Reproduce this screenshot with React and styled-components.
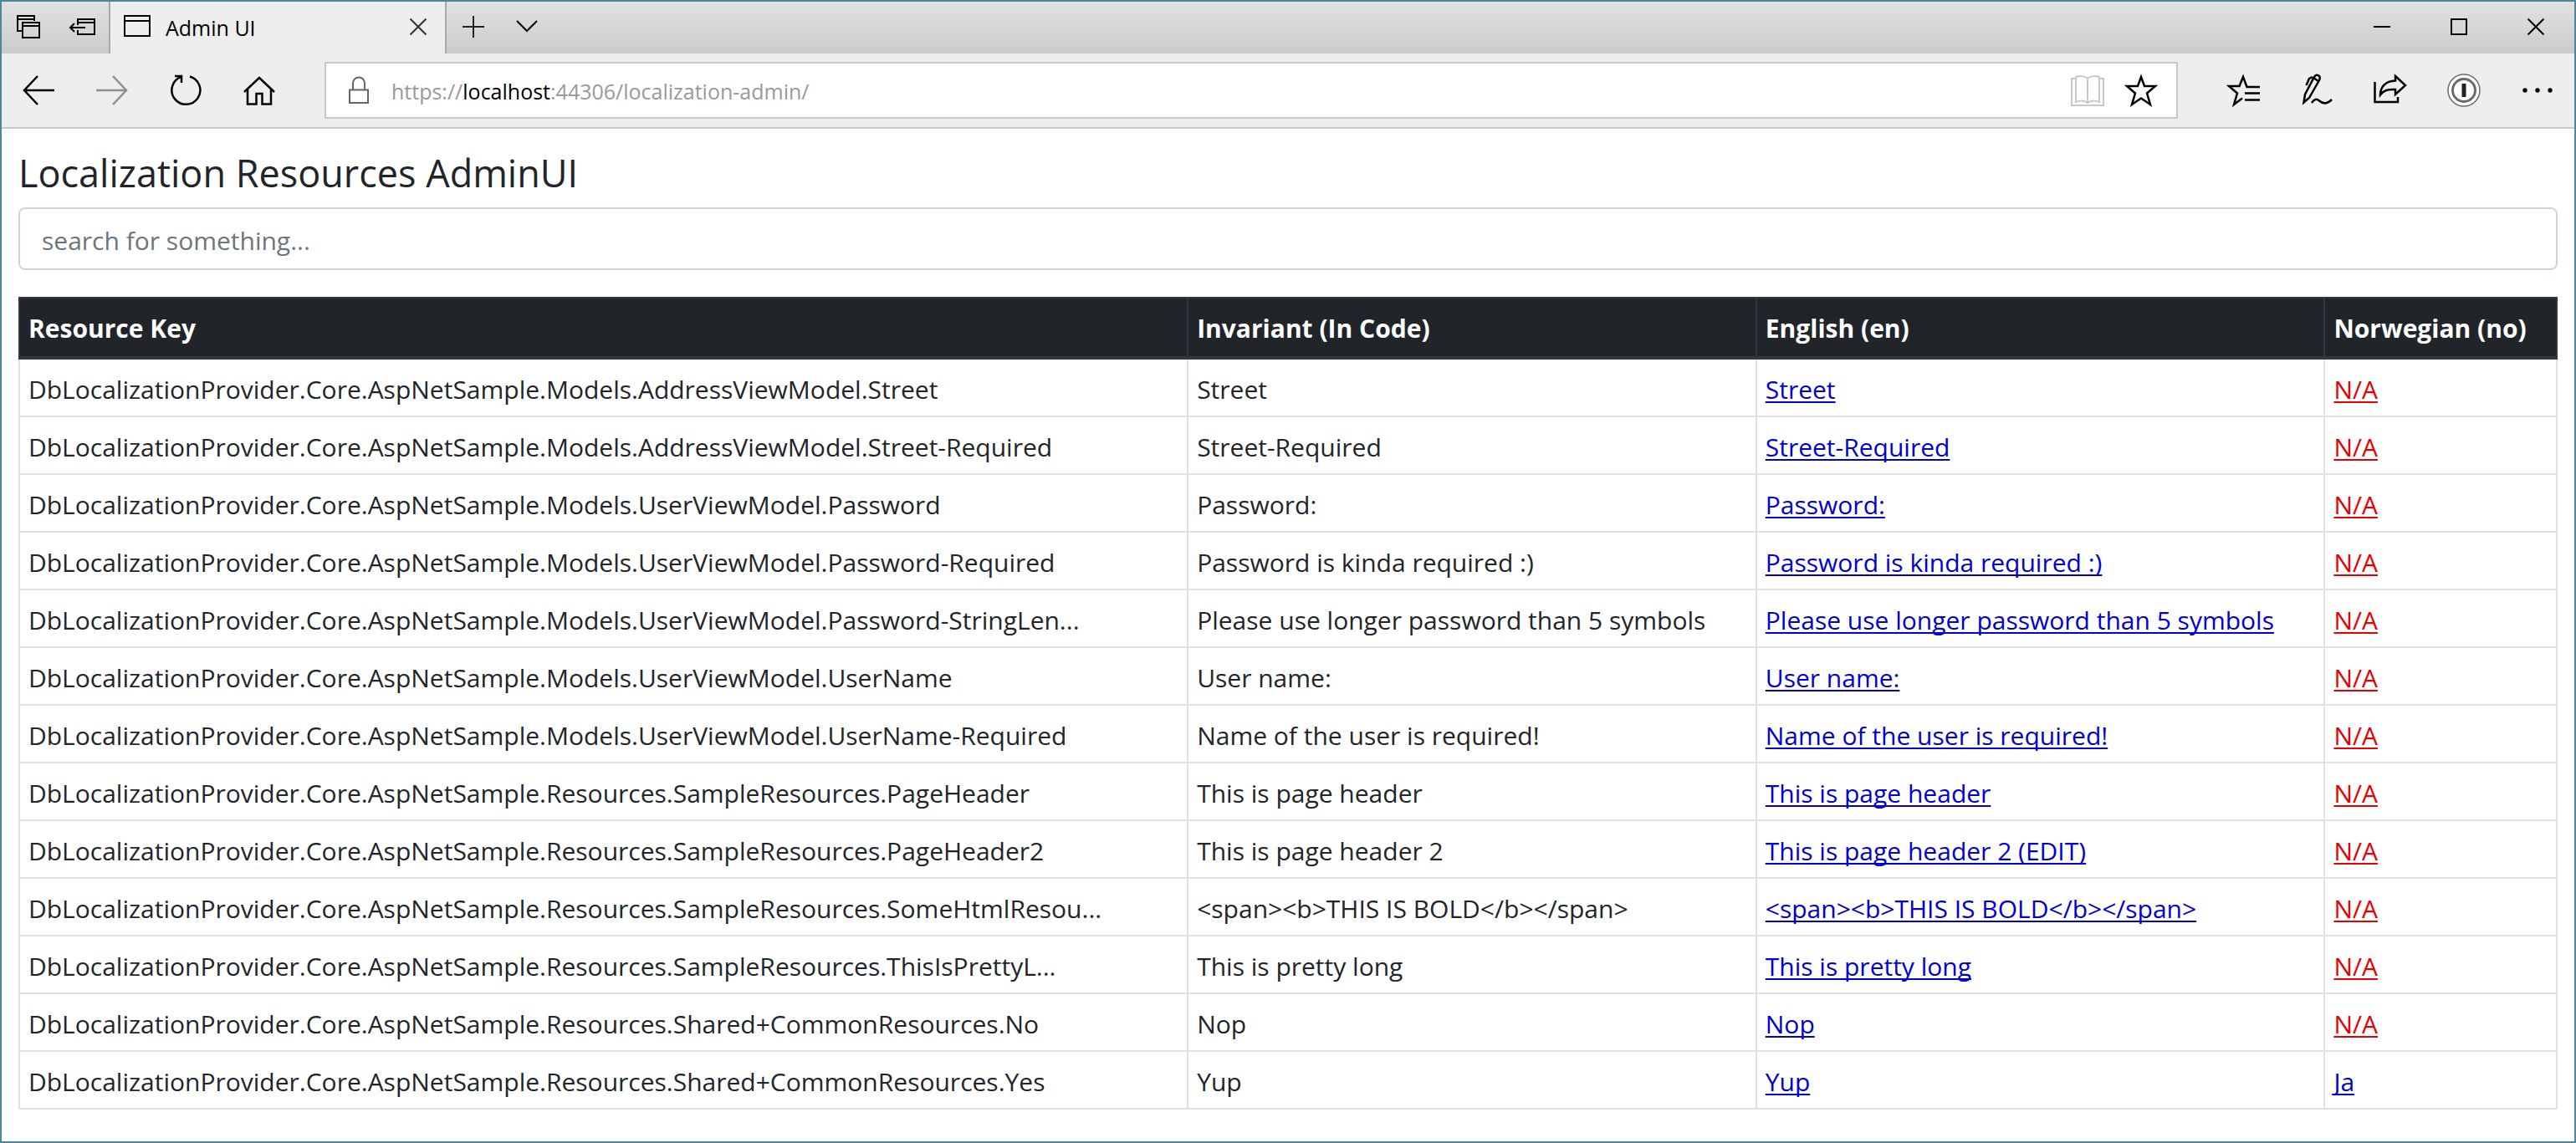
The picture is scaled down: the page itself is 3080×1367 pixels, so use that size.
import React from 'react';
import styled, { createGlobalStyle, css } from 'styled-components';

const GlobalStyle = createGlobalStyle`
  *, *::before, *::after { box-sizing: border-box; }
  body {
    margin: 0;
    background: #fff;
    color: #212529;
    font-family: "Open Sans", "Noto Sans", sans-serif;
    font-size: 30px;
  }
`;

/* ---------- browser window ---------- */

const Window = styled.div`
  display: flex;
  flex-direction: column;
  min-height: 100vh;
  border: 2px solid #4a889c;
`;

const TabStrip = styled.header`
  display: flex;
  height: 62px;
  background: linear-gradient(#e2e2e2, #cbcbcb);
`;

const Tab = styled.div`
  display: flex;
  align-items: center;
  width: 404px;
  padding-left: 16px;
  gap: 18px;
  border: solid #a9a9a9;
  border-width: 0 2px;
  background: #eee;
  color: #000;
  font-size: 25px;
`;

const TabTitle = styled.span`
  flex: 1;
`;

const Spacer = styled.div`
  flex: 1;
`;

const buttonWidths = { tab: '64px', lock: '78px', tool: '88px', caption: '92px' };

const IconButton = styled.button`
  display: flex;
  flex: none;
  align-items: center;
  justify-content: center;
  align-self: stretch;
  width: ${({ $kind }) => buttonWidths[$kind]};
  padding: 0;
  border: 0;
  background: none;
  color: ${({ $tone }) => $tone || '#000'};
`;

const Toolbar = styled.nav`
  display: flex;
  align-items: center;
  height: 90px;
  border-bottom: 2px solid #c8c8c8;
  background: #eee;
`;

const AddressBar = styled.div`
  display: flex;
  flex: 1;
  align-items: center;
  height: 68px;
  margin: 0 34px;
  padding-right: 10px;
  border: 2px solid #c8c8c8;
  background: #fff;
`;

const Url = styled.div`
  flex: 1;
  padding-top: 2px;
  color: #999;
  font-size: 25px;
  white-space: nowrap;
  outline: none;
`;

const Host = styled.span`
  color: #000;
`;

const Glyph = styled.svg`
  display: block;
  flex: none;
  fill: none;
  stroke: currentColor;
  stroke-width: ${({ $weight }) => $weight || 2};
`;

function Icon({ weight, children }) {
  return (
    <Glyph $weight={weight} width="40" height="40" viewBox="0 0 40 40" aria-hidden="true">
      {children}
    </Glyph>
  );
}

/* ---------- admin page ---------- */

const Page = styled.main`
  flex: 1;
  padding: 24px 20px;
`;

const Title = styled.h1`
  margin: 0 0 12px;
  font-size: 45px;
  font-weight: 400;
  line-height: 58px;
`;

const Search = styled.input`
  display: block;
  width: 100%;
  height: 75px;
  margin-bottom: 32px;
  padding: 4px 26px 0;
  border: 2px solid #ced4da;
  border-radius: 8px;
  background: #fff;
  color: #495057;
  font: inherit;

  &::placeholder {
    color: #6c757d;
    opacity: 1;
  }
`;

const Table = styled.table`
  width: 100%;
  table-layout: fixed;
  border-collapse: collapse;
  line-height: 47px;
`;

const cell = css`
  padding: 12px 10px 8px;
  text-align: left;
  white-space: nowrap;
`;

const HeadCell = styled.th`
  ${cell}
  width: ${({ $width }) => $width || 'auto'};
  padding-bottom: 10px;
  border: 2px solid #32383e;
  border-bottom-width: 4px;
  background: #212529;
  color: #fff;
  font-weight: 700;
`;

const Cell = styled.td`
  ${cell}
  border: 2px solid #dee2e6;
`;

const Translation = styled.a`
  color: ${({ $missing }) => ($missing ? '#e60000' : '#0000d0')};
  text-decoration: underline;
  text-decoration-thickness: 2px;
  text-decoration-skip-ink: none;
  text-underline-offset: 3px;
`;

const columns = [
  { label: 'Resource Key', width: '46.05%' },
  { label: 'Invariant (In Code)', width: '22.4%' },
  { label: 'English (en)', width: '22.4%' },
  { label: 'Norwegian (no)' },
];

const root = 'DbLocalizationProvider.Core.AspNetSample.';

const resources = [
  { key: 'Models.AddressViewModel.Street', text: 'Street' },
  { key: 'Models.AddressViewModel.Street-Required', text: 'Street-Required' },
  { key: 'Models.UserViewModel.Password', text: 'Password:' },
  { key: 'Models.UserViewModel.Password-Required', text: 'Password is kinda required :)' },
  { key: 'Models.UserViewModel.Password-StringLen...', text: 'Please use longer password than 5 symbols' },
  { key: 'Models.UserViewModel.UserName', text: 'User name:' },
  { key: 'Models.UserViewModel.UserName-Required', text: 'Name of the user is required!' },
  { key: 'Resources.SampleResources.PageHeader', text: 'This is page header' },
  { key: 'Resources.SampleResources.PageHeader2', text: 'This is page header 2', en: 'This is page header 2 (EDIT)' },
  { key: 'Resources.SampleResources.SomeHtmlResou...', text: '<span><b>THIS IS BOLD</b></span>' },
  { key: 'Resources.SampleResources.ThisIsPrettyL...', text: 'This is pretty long' },
  { key: 'Resources.Shared+CommonResources.No', text: 'Nop' },
  { key: 'Resources.Shared+CommonResources.Yes', text: 'Yup', no: 'Ja' },
];

function BrowserTabs() {
  return (
    <TabStrip>
      <IconButton $kind="tab" aria-label="Tabs you've set aside">
        <Icon><path d="M12 24H7V6H27V12M7 10H27M13 14H33V32H13ZM13 18H33" /></Icon>
      </IconButton>
      <IconButton $kind="tab" aria-label="Set these tabs aside">
        <Icon><path d="M15 17V10H35V28H15V23M15 14H35M24 20H6M11 15L6 20L11 25" /></Icon>
      </IconButton>
      <Tab>
        <Glyph width="32" height="30" viewBox="0 0 32 30" aria-hidden="true">
          <path d="M1 1H31V25H1ZM1 7H31" />
        </Glyph>
        <TabTitle>Admin UI</TabTitle>
        <IconButton $kind="tab" $tone="#333" aria-label="Close tab">
          <Icon><path d="M10.500 9.500L29.500 28.500M29.500 9.500L10.500 28.500" /></Icon>
        </IconButton>
      </Tab>
      <IconButton $kind="tab" $tone="#222" aria-label="New tab">
        <Icon><path d="M7 19H33M20 6V32" /></Icon>
      </IconButton>
      <IconButton $kind="tab" aria-label="Show tab previews">
        <Icon><path d="M8 12L20 24L32 12" /></Icon>
      </IconButton>
      <Spacer />
      <IconButton $kind="caption" aria-label="Minimize">
        <Icon><path d="M10 19H30" /></Icon>
      </IconButton>
      <IconButton $kind="caption" aria-label="Maximize">
        <Icon><path d="M11 10H29V28H11Z" /></Icon>
      </IconButton>
      <IconButton $kind="caption" aria-label="Close">
        <Icon><path d="M10.500 9.500L29.500 28.500M29.500 9.500L10.500 28.500" /></Icon>
      </IconButton>
    </TabStrip>
  );
}

function BrowserToolbar() {
  return (
    <Toolbar>
      <IconButton $kind="tool" aria-label="Back">
        <Icon weight={2.5}><path d="M39 20H3M19 3L3 20L19 37" /></Icon>
      </IconButton>
      <IconButton $kind="tool" $tone="#8e8e8e" aria-label="Forward">
        <Icon weight={2.5}><path d="M1 20H37M21 3L37 20L21 37" /></Icon>
      </IconButton>
      <IconButton $kind="tool" aria-label="Refresh">
        <Icon weight={2.5}><path d="M25 3.500A17 17 0 1 1 14 4.100M7 3H15V11" /></Icon>
      </IconButton>
      <IconButton $kind="tool" aria-label="Home">
        <Icon weight={2.5}><path d="M2 22L20 5L38 22M6 19V36.500H16.500V24H23.500V36.500H34V19" /></Icon>
      </IconButton>
      <AddressBar>
        <IconButton $kind="lock" $tone="#666" aria-label="Website identification">
          <Icon><path d="M9 19.500H31V35H9ZM13 19V11.500A7 7 0 0 1 27 11.500V19" /></Icon>
        </IconButton>
        <Url role="textbox" aria-label="Address" contentEditable suppressContentEditableWarning spellCheck={false}>
          https://<Host>localhost</Host>:44306/localization-admin/
        </Url>
        <IconButton $kind="tab" $tone="#c8c8c8" aria-label="Reading view">
          <Icon>
            <path d="M6 6H1V38H39V6H34M6 4C11 2 16 3 20 5.500C24 3 29 2 34 4V34C29 32 24 32 20 35C16 32 11 32 6 34ZM20 5.500V35" />
          </Icon>
        </IconButton>
        <IconButton $kind="tab" aria-label="Add to favorites">
          <Icon weight={2.5}>
            <path d="M20 4L24 15H37L27 23.500L31 37L20 29.500L9 37L13 23.500L3 15H16Z" />
          </Icon>
        </IconButton>
      </AddressBar>
      <IconButton $kind="tool" aria-label="Favorites">
        <Icon weight={2.5}>
          <path d="M40 16H24.500L20 4L15.500 15H3L13 23.500L9 37L19 29.500M22 23.500H40M22 31.500H40" />
        </Icon>
      </IconButton>
      <IconButton $kind="tool" aria-label="Add notes">
        <Icon weight={2.5}>
          <path d="M4.500 34.500L6 25L17 4Q20 0 23 3Q24.500 5 23 8L11 29ZM16 5L22 9M15 4L11 6L7.500 14M14 35C17 30 20 30 23 32.500C28 37 33 36 38 31" />
        </Icon>
      </IconButton>
      <IconButton $kind="tool" aria-label="Share">
        <Icon weight={2.5}>
          <path d="M1.500 10V34H29V28M26 3L38 14L26 25V19C17 18.500 12 20 8 25.500C8 16 14 9 26 8.500Z" />
        </Icon>
      </IconButton>
      <IconButton $kind="tool" $tone="#6b6b6b" aria-label="1Password">
        <Icon>
          <circle cx="20" cy="20" r="19" fill="#fff" strokeWidth="1.500" />
          <circle cx="20" cy="20" r="13.500" strokeWidth="3" />
          <path d="M17.500 12H22.500V28H17.500Z" fill="#222" stroke="none" />
        </Icon>
      </IconButton>
      <IconButton $kind="tool" aria-label="Settings and more">
        <Icon>
          <g fill="#000" stroke="none">
            <circle cx="5" cy="20" r="2.700" />
            <circle cx="20" cy="20" r="2.700" />
            <circle cx="35" cy="20" r="2.700" />
          </g>
        </Icon>
      </IconButton>
    </Toolbar>
  );
}

function ResourceTable() {
  return (
    <Table>
      <thead>
        <tr>
          {columns.map(({ label, width }) => (
            <HeadCell key={label} scope="col" $width={width}>{label}</HeadCell>
          ))}
        </tr>
      </thead>
      <tbody>
        {resources.map(({ key, text, en = text, no }) => (
          <tr key={key}>
            <Cell>{root + key}</Cell>
            <Cell>{text}</Cell>
            <Cell><Translation href="#en">{en}</Translation></Cell>
            <Cell><Translation href="#no" $missing={!no}>{no || 'N/A'}</Translation></Cell>
          </tr>
        ))}
      </tbody>
    </Table>
  );
}

export default function App() {
  return (
    <Window>
      <GlobalStyle />
      <BrowserTabs />
      <BrowserToolbar />
      <Page>
        <Title>Localization Resources AdminUI</Title>
        <Search type="search" placeholder="search for something..." aria-label="Search resources" />
        <ResourceTable />
      </Page>
    </Window>
  );
}
